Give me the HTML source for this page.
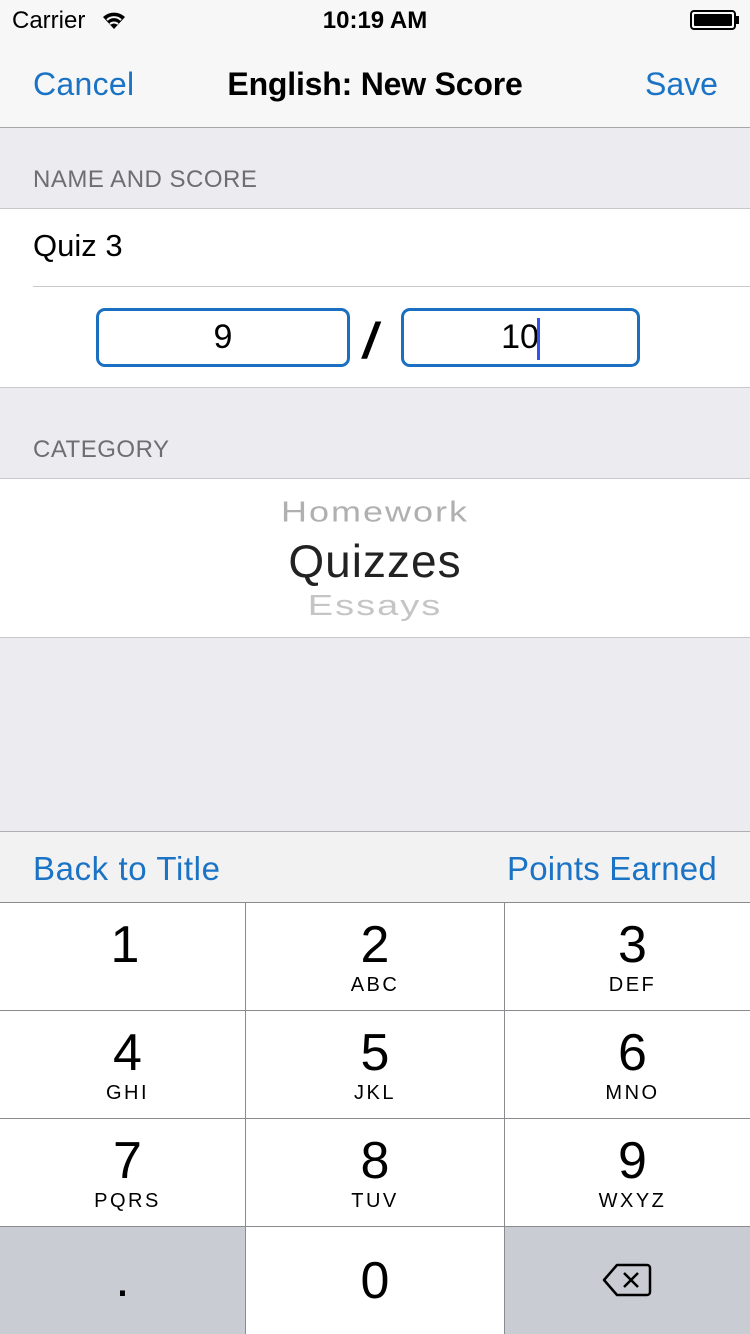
<!DOCTYPE html>
<html><head><style>
*{margin:0;padding:0;box-sizing:border-box}
body{width:750px;height:1334px;background:#ebebf0;font-family:"Liberation Sans",sans-serif;position:relative;overflow:hidden}
.a{position:absolute}
.blue{color:#1a73c4}
.key{position:absolute;background:#fff;text-align:center;color:#000}
.key .d{font-size:52px;line-height:52px;margin-top:16px}
.key .l{font-size:20px;letter-spacing:2.5px;margin-top:3px}
</style></head><body>
<div class="a" style="left:0;top:0;width:750px;height:128px;background:#f7f7f7;border-bottom:1px solid #a7a7aa"></div>
<div class="a" style="left:12px;top:7px;font-size:24px">Carrier</div>
<svg class="a" style="left:101px;top:10px" width="26" height="20" viewBox="0 0 26 20"><path d="M13 19 L2 7 A16 16 0 0 1 24 7 Z" fill="#000"/><path d="M6 10 A10 10 0 0 1 20 10" stroke="#f7f7f7" stroke-width="2" fill="none"/><path d="M9 14 A6 6 0 0 1 17 14" stroke="#f7f7f7" stroke-width="2" fill="none"/></svg>
<div class="a" style="left:0;width:750px;top:7px;text-align:center;font-size:24px;font-weight:bold">10:19 AM</div>
<div class="a" style="left:690px;top:10px;width:46px;height:20px;border:2px solid #000;border-radius:4px;padding:2px"><div style="background:#000;height:100%;border-radius:1px"></div></div>
<div class="a" style="left:736px;top:16px;width:3px;height:8px;background:#000"></div>
<div class="a blue" style="left:33px;top:66px;font-size:32px;letter-spacing:0.3px">Cancel</div>
<div class="a" style="left:0;width:750px;top:66px;text-align:center;font-size:32px;font-weight:bold;letter-spacing:-0.2px">English: New Score</div>
<div class="a blue" style="left:645px;top:66px;font-size:32px">Save</div>
<div class="a" style="left:33px;top:166px;font-size:24px;color:#6d6d72;letter-spacing:0.5px">NAME AND SCORE</div>
<div class="a" style="left:0;top:208px;width:750px;height:180px;background:#fff;border-top:1px solid #c8c7cc;border-bottom:1px solid #c8c7cc"></div>
<div class="a" style="left:33px;top:228px;font-size:31px">Quiz 3</div>
<div class="a" style="left:33px;top:286px;width:717px;height:1px;background:#c8c7cc"></div>
<div class="a" style="left:96px;top:308px;width:254px;height:59px;border:3px solid #1a6fc0;border-radius:9px;text-align:center;font-size:34px;line-height:53px">9</div>
<div class="a" style="left:363px;top:312px;font-size:50px;font-weight:bold;font-style:italic">/</div>
<div class="a" style="left:401px;top:308px;width:239px;height:59px;border:3px solid #1a6fc0;border-radius:9px;text-align:center;font-size:34px;line-height:53px">10<span style="display:inline-block;width:3px;height:42px;background:#3552f0;vertical-align:middle;margin-left:-2px"></span></div>
<div class="a" style="left:33px;top:436px;font-size:24px;color:#6d6d72;letter-spacing:0.5px">CATEGORY</div>
<div class="a" style="left:0;top:478px;width:750px;height:160px;background:#fff;border-top:1px solid #c8c7cc;border-bottom:1px solid #c8c7cc;overflow:hidden">
<div class="a" style="left:0;width:750px;top:12px;text-align:center;font-size:36px;color:#b0b0b0;letter-spacing:2px;transform:scaleY(0.8)">Homework</div>
<div class="a" style="left:0;width:750px;top:55px;text-align:center;font-size:46px;color:#222;letter-spacing:1px">Quizzes</div>
<div class="a" style="left:0;width:750px;top:106px;text-align:center;font-size:38px;color:#c5c5c5;letter-spacing:2px;transform:scaleY(0.75)">Essays</div>
</div>
<div class="a" style="left:0;top:831px;width:750px;height:72px;background:#f2f2f3;border-top:1px solid #b0b0b3"></div>
<div class="a blue" style="left:33px;top:850px;font-size:33px;letter-spacing:0.6px">Back to Title</div>
<div class="a blue" style="left:507px;top:850px;font-size:33px;letter-spacing:0.2px">Points Earned</div>
<div class="a" style="left:0;top:902px;width:750px;height:432px;background:#8a8b8e"></div>
<div class="key" style="left:5px;top:903px;width:240px;height:107px;box-shadow:-5px 0 0 #fff"><div class="d">1</div></div>
<div class="key" style="left:246px;top:903px;width:258px;height:107px"><div class="d">2</div><div class="l">ABC</div></div>
<div class="key" style="left:505px;top:903px;width:245px;height:107px;padding-left:10px"><div class="d">3</div><div class="l">DEF</div></div>
<div class="key" style="left:0;top:1011px;width:245px;height:107px;padding-left:10px"><div class="d">4</div><div class="l">GHI</div></div>
<div class="key" style="left:246px;top:1011px;width:258px;height:107px"><div class="d">5</div><div class="l">JKL</div></div>
<div class="key" style="left:505px;top:1011px;width:245px;height:107px;padding-left:10px"><div class="d">6</div><div class="l">MNO</div></div>
<div class="key" style="left:0;top:1119px;width:245px;height:107px;padding-left:10px"><div class="d">7</div><div class="l">PQRS</div></div>
<div class="key" style="left:246px;top:1119px;width:258px;height:107px"><div class="d">8</div><div class="l">TUV</div></div>
<div class="key" style="left:505px;top:1119px;width:245px;height:107px;padding-left:10px"><div class="d">9</div><div class="l">WXYZ</div></div>
<div class="key" style="left:0;top:1227px;width:245px;height:107px;background:#c9ccd3"><div class="d" style="margin-top:26px">.</div></div>
<div class="key" style="left:246px;top:1227px;width:258px;height:107px"><div class="d" style="margin-top:28px">0</div></div>
<div class="key" style="left:505px;top:1227px;width:245px;height:107px;background:#c9ccd3">
<svg style="position:absolute;left:97px;top:36px" width="50" height="34" viewBox="0 0 50 34"><path d="M15 2 H45 a3 3 0 0 1 3 3 V29 a3 3 0 0 1 -3 3 H15 L2 17 Z" fill="none" stroke="#000" stroke-width="2.5" stroke-linejoin="round"/><path d="M22 10 L36 24 M36 10 L22 24" stroke="#000" stroke-width="2.5"/></svg></div>
</body></html>
